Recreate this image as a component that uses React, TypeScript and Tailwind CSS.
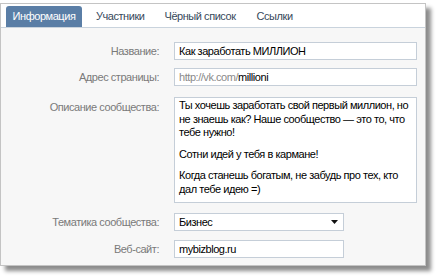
import React from "react";

const font = { fontFamily: '"Liberation Sans", Arial, sans-serif' };

function Label({ children, className = "" }: { children: React.ReactNode; className?: string }) {
  return (
    <div className={`w-[158px] shrink-0 text-right text-[11px] text-[#7a7a7a] leading-[18px] ${className}`}>{children}</div>
  );
}

export default function App() {
  return (
    <div className="w-[440px] h-[280px] bg-white overflow-hidden tracking-[-0.45px]" style={font}>
      <div className="mt-[3px] w-[426px] h-[263px] border border-[#c4c4c4] bg-[#f7f7f7] shadow-[5px_5px_4px_rgba(0,0,0,0.45)] flex flex-col">
        <div className="h-[24px] bg-white flex items-end pl-[5px] border-b border-[#c9d3dd]">
          <div className="w-[76px] h-[21px] rounded-t-[3px] bg-[#5a7ea6] text-white text-[11px] leading-[21px] text-center">Информация</div>
          <div className="h-[21px] ml-[14px] text-[#37495b] text-[11px] leading-[21px]">Участники</div>
          <div className="h-[21px] ml-[20px] text-[#37495b] text-[11px] leading-[21px]">Чёрный список</div>
          <div className="h-[21px] ml-[21px] text-[#37495b] text-[11px] leading-[21px]">Ссылки</div>
        </div>
        <div className="flex flex-col pt-[14px] text-[11px] text-black">
          <div className="flex items-center">
            <Label>Название:</Label>
            <div className="ml-[15px] w-[243px] h-[18px] bg-white border border-[#c5ced8] px-[4px] leading-[16px]">Как заработать МИЛЛИОН</div>
          </div>
          <div className="flex items-center mt-[8px]">
            <Label>Адрес страницы:</Label>
            <div className="ml-[15px] w-[243px] h-[18px] bg-white border border-[#c5ced8] px-[4px] leading-[16px]">
              <span className="text-[#8a8a8a]">http://vk.com/</span>millioni
            </div>
          </div>
          <div className="flex items-start mt-[11px]">
            <Label className="mt-[1px]">Описание сообщества:</Label>
            <div className="ml-[15px] w-[243px] h-[106px] bg-white border border-[#c5ced8] pl-[4px] pr-[4px] pt-[1px] leading-[13.5px]">
              <p>Ты хочешь заработать свой первый миллион, но не знаешь как? Наше сообщество — это то, что тебе нужно!</p>
              <p className="mt-[8px]">Сотни идей у тебя в кармане!</p>
              <p className="mt-[8px]">Когда станешь богатым, не забудь про тех, кто дал тебе идею =)</p>
            </div>
          </div>
          <div className="flex items-center mt-[10px]">
            <Label>Тематика сообщества:</Label>
            <div className="ml-[15px] w-[170px] h-[18px] bg-white border border-[#c5ced8] pl-[4px] pr-[5px] leading-[16px] flex items-center justify-between">
              <span>Бизнес</span>
              <svg width="7" height="4" viewBox="0 0 7 4"><path d="M0 0h7L3.5 4z" fill="#111" /></svg>
            </div>
          </div>
          <div className="flex items-center mt-[9px]">
            <Label>Веб-сайт:</Label>
            <div className="ml-[15px] w-[170px] h-[18px] bg-white border border-[#c5ced8] px-[4px] leading-[16px]">mybizblog.ru</div>
          </div>
        </div>
      </div>
    </div>
  );
}
